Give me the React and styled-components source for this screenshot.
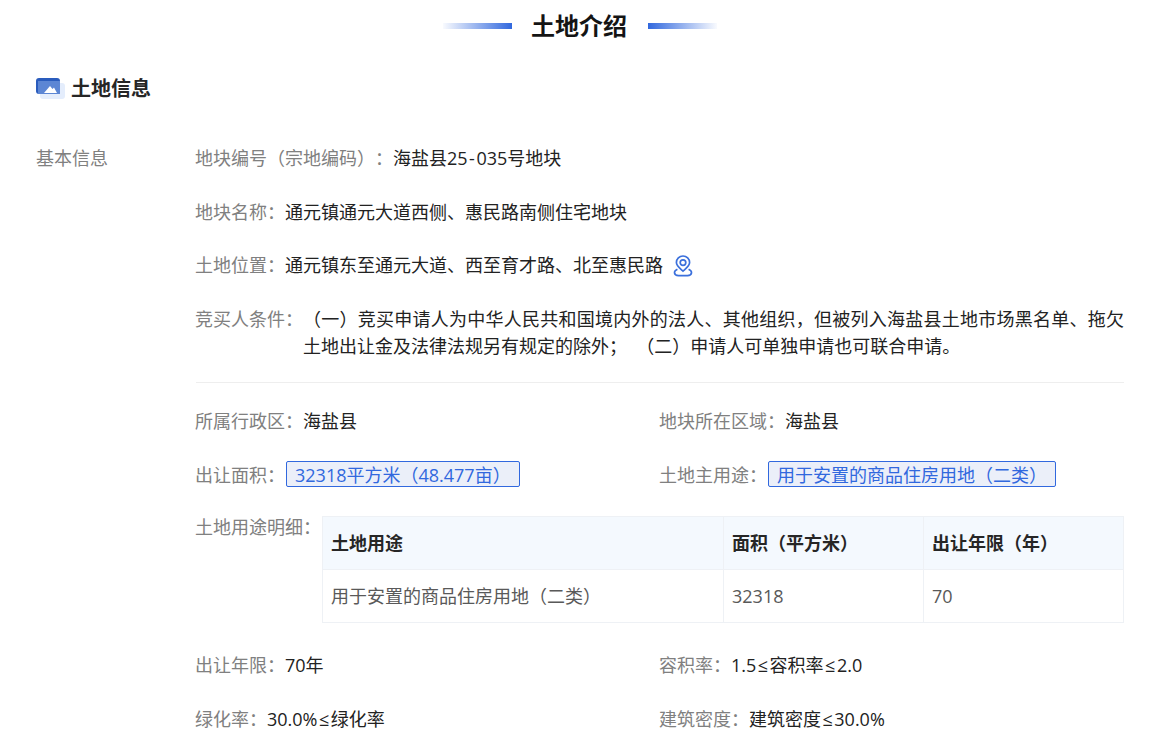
import React from "react";
import styled, { createGlobalStyle } from "styled-components";

const Global = createGlobalStyle`
  html, body { margin: 0; padding: 0; background: #fff; height: 749px; overflow: hidden; }
  body {
    font-family: "Open Sans", "Noto Sans CJK SC", sans-serif;
    color: #222;
    text-spacing-trim: space-all;
    font-kerning: none;
  }
`;
const Page = styled.div`
  width: 1157px;
  height: 749px;
  overflow: hidden;
  padding: 0 33px 0 36px;
  box-sizing: border-box;
`;
const TitleBar = styled.div`
  display: flex;
  align-items: center;
  justify-content: center;
  gap: 20px;
  height: 52px;
`;
const TitleLine = styled.span`
  flex: none;
  width: 69px;
  height: 6px;
  background: linear-gradient(${(p) => (p.$flip ? "to left" : "to right")}, rgba(49,104,222,0.03), #3168de);
`;
const Title = styled.h1`
  margin: 0 1px 0 -1px;
  font-size: 24px;
  line-height: 32px;
  font-weight: 700;
  color: #141414;
`;
const SectionHead = styled.div`
  display: flex;
  align-items: center;
  gap: 5px;
  height: 36px;
  margin-top: 19px;
  margin-bottom: 38px;
`;
const SectionTitle = styled.h2`
  margin: 0;
  font-size: 20px;
  line-height: 28px;
  font-weight: 700;
  color: #262626;
`;
const Body = styled.div`
  display: grid;
  grid-template-columns: 160px 1fr;
`;
const SideLabel = styled.div`
  font-size: 18px;
  line-height: 27px;
  color: #808080;
`;
const Fields = styled.div`
  display: flex;
  flex-direction: column;
  min-width: 0;
`;
const Row = styled.div`
  display: flex;
  font-size: 18px;
  line-height: 27px;
  margin-bottom: ${(p) => p.$gap ?? 27}px;
  align-items: flex-start;
`;
const Label = styled.span`
  color: #808080;
  white-space: nowrap;
  flex: none;
  margin-left: -1px;
`;
const Value = styled.span`
  color: #222;
`;
const Para = styled.span`
  flex: 1;
  min-width: 0;
  color: #222;
  text-align: justify;
  white-space: pre-wrap;
`;
const Rel = styled.span`
  padding: 0 1.5px;
`;
const PinLink = styled.span`
  display: inline-flex;
  margin-left: 10px;
  height: 27px;
  align-items: center;
`;
const Divider = styled.div`
  height: 1px;
  background: #eeeeee;
  margin: -5px 0 25px;
`;
const TwoCol = styled.div`
  display: grid;
  grid-template-columns: 464px 1fr;
  margin-bottom: ${(p) => p.$gap ?? 27}px;
`;
const Tag = styled.span`
  display: inline-block;
  margin: -1px 0 0 1px;
  padding: 0 8px;
  height: 24px;
  line-height: 26px;
  border: 1px solid #3168de;
  border-radius: 2px;
  background: #ebeff9;
  color: #3168de;
  white-space: nowrap;
`;
const Table = styled.table`
  flex: none;
  border-collapse: collapse;
  table-layout: fixed;
  margin: 2px 0 0 1px;
  width: 801px;
`;
const Th = styled.th`
  background: #f4f9fe;
  border: 1px solid #eef1f5;
  height: 53px;
  padding: 0 8px;
  text-align: left;
  font-weight: 700;
  font-size: 18px;
  color: #262626;
  box-sizing: border-box;
`;
const Td = styled.td`
  border: 1px solid #eef1f5;
  height: 53px;
  padding: 0 8px;
  font-size: 18px;
  color: #595959;
  box-sizing: border-box;
`;

function LandIcon() {
  return (
    <svg width="30" height="22" viewBox="0 0 30 22">
      <rect x="4" y="5" width="25" height="16" rx="3" fill="#e4edfc" />
      <rect x="0" y="0" width="24" height="16" rx="3" fill="#2a5cbd" />
      <rect x="2" y="3" width="22" height="13" fill="#5c86d4" />
      <path d="M8 15 L14 8 L16.5 11 L18 9.5 L21 15 Z" fill="#fff" />
    </svg>
  );
}
function PinIcon() {
  return (
    <svg width="20" height="22" viewBox="0 0 20 22" fill="none" stroke="#3b70dc" strokeWidth="1.7">
      <path d="M10 16.2 C6.8 13.4 3.4 11 3.4 7.6 A6.6 6.6 0 0 1 16.6 7.6 C16.6 11 13.2 13.4 10 16.2 Z" />
      <circle cx="10" cy="7.6" r="2.8" />
      <path d="M4.4 14.2 C2.4 15.2 1.3 16.4 1.5 17.9 C1.7 19.5 3.6 20.6 5.5 20.6 H14.5 C16.4 20.6 18.3 19.5 18.5 17.9 C18.7 16.4 17.6 15.2 15.6 14.2" />
    </svg>
  );
}

export default function App() {
  return (
    <Page>
      <Global />
      <TitleBar>
        <TitleLine />
        <Title>土地介绍</Title>
        <TitleLine $flip />
      </TitleBar>
      <SectionHead>
        <LandIcon />
        <SectionTitle>土地信息</SectionTitle>
      </SectionHead>
      <Body>
        <SideLabel>基本信息</SideLabel>
        <Fields>
          <Row>
            <Label>地块编号（宗地编码）：</Label>
            <Value>海盐县25<Rel>-</Rel>035号地块</Value>
          </Row>
          <Row $gap={26}>
            <Label>地块名称：</Label>
            <Value>通元镇通元大道西侧、惠民路南侧住宅地块</Value>
          </Row>
          <Row>
            <Label>土地位置：</Label>
            <Value>通元镇东至通元大道、西至育才路、北至惠民路</Value>
            <PinLink><PinIcon /></PinLink>
          </Row>
          <Row>
            <Label>竞买人条件：</Label>
            <Para>（一）竞买申请人为中华人民共和国境内外的法人、其他组织，但被列入海盐县土地市场黑名单、拖欠土地出让金及法律法规另有规定的除外；  （二）申请人可单独申请也可联合申请。</Para>
          </Row>
          <Divider />
          <TwoCol>
            <Row $gap={0}><Label>所属行政区：</Label><Value>海盐县</Value></Row>
            <Row $gap={0}><Label>地块所在区域：</Label><Value>海盐县</Value></Row>
          </TwoCol>
          <TwoCol $gap={25}>
            <Row $gap={0}><Label>出让面积：</Label><Tag>32318平方米（48.477亩）</Tag></Row>
            <Row $gap={0}><Label>土地主用途：</Label><Tag>用于安置的商品住房用地（二类）</Tag></Row>
          </TwoCol>
          <Row $gap={29}>
            <Label>土地用途明细：</Label>
            <Table>
              <colgroup>
                <col style={{ width: 401 }} />
                <col style={{ width: 200 }} />
                <col style={{ width: 200 }} />
              </colgroup>
              <thead>
                <tr><Th>土地用途</Th><Th>面积（平方米）</Th><Th>出让年限（年）</Th></tr>
              </thead>
              <tbody>
                <tr><Td>用于安置的商品住房用地（二类）</Td><Td>32318</Td><Td>70</Td></tr>
              </tbody>
            </Table>
          </Row>
          <TwoCol>
            <Row $gap={0}><Label>出让年限：</Label><Value>70年</Value></Row>
            <Row $gap={0}><Label>容积率：</Label><Value>1.5<Rel>≤</Rel>容积率<Rel>≤</Rel>2.0</Value></Row>
          </TwoCol>
          <TwoCol>
            <Row $gap={0}><Label>绿化率：</Label><Value>30.0%<Rel>≤</Rel>绿化率</Value></Row>
            <Row $gap={0}><Label>建筑密度：</Label><Value>建筑密度<Rel>≤</Rel>30.0%</Value></Row>
          </TwoCol>
        </Fields>
      </Body>
    </Page>
  );
}
